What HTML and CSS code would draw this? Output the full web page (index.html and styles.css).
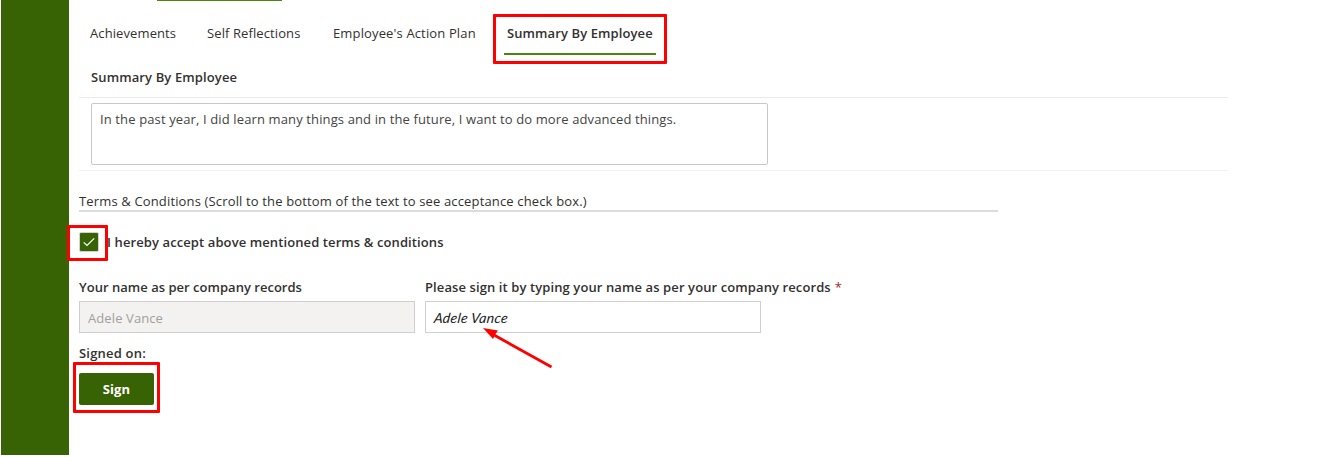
FILE: index.html
```html
<!DOCTYPE html>
<html lang="en">
<head>
<meta charset="utf-8">
<title>Summary By Employee</title>
<link rel="stylesheet" href="styles.css">
</head>
<body>
<div class="page">
  <aside class="rail"></aside>
  <main class="content">
    <div class="parent-tab"></div>
    <nav class="tabs">
      <span class="tab achievements">Achievements</span>
      <span class="tab reflections">Self Reflections</span>
      <span class="tab plan">Employee's Action Plan</span>
      <span class="tab active">Summary By Employee</span>
    </nav>
    <section class="summary">
      <h2 class="heading">Summary By Employee</h2>
      <div class="summary-body">
        <div class="textarea">In the past year, I did learn many things and in the future, I want to do more advanced things.</div>
      </div>
    </section>
    <div class="terms">Terms &amp; Conditions (Scroll to the bottom of the text to see acceptance check box.)</div>
    <div class="accept">
      <span class="checkbox">
        <svg width="18" height="18" viewBox="0 0 18 18"><path d="M3.7 9.4 7 12.5 14.2 5.3" fill="none" stroke="#fff" stroke-width="1.2"/></svg>
      </span>
      <span class="accept-text">I hereby accept above mentioned terms &amp; conditions</span>
    </div>
    <div class="fields">
      <div class="field">
        <div class="label"><span class="name-label">Your name as per company records</span></div>
        <div class="input disabled">Adele Vance</div>
      </div>
      <div class="field">
        <div class="label"><span class="sign-label">Please sign it by typing your name as per your company records</span><span class="required">*</span></div>
        <div class="input"><span class="signature">Adele Vance</span></div>
      </div>
    </div>
    <div class="signed">Signed on:</div>
    <div class="button">Sign</div>
  </main>
  <div class="mark mark-tab"></div>
  <div class="mark mark-check"></div>
  <div class="mark mark-sign"></div>
  <svg class="arrow" width="72" height="44" viewBox="0 0 72 44"><path d="M11 7 68.5 39" stroke="#f00" stroke-width="2.8"/><path d="M0 0 15 2.5 12.5 6 10 11Z" fill="#f00"/></svg>
</div>
</body>
</html>
```
FILE: styles.css
```css
* { box-sizing: border-box; }
body { margin: 0; background: #fff; color: #323130; font-family: "Open Sans", "Noto Sans", sans-serif; font-size: 13px; line-height: 20px; letter-spacing: 0.1px; }
.page { position: relative; width: 1326px; height: 457px; display: flex; padding-left: 1px; overflow: hidden; }
.rail { width: 68px; height: 455px; background: #386304; flex: none; }
.content { padding-left: 10px; width: 1159px; white-space: nowrap; }
.parent-tab { width: 125px; height: 1px; margin-left: 78px; background: #4b860a; }
.tabs { display: flex; height: 54px; padding: 22px 0 0 11px; }
.tab { height: 32px; }
.achievements { width: 117px; }
.reflections { width: 126px; }
.plan { width: 171px; letter-spacing: 0.14px; }
.active { width: 152px; padding-left: 3px; border-bottom: 2px solid #4b860a; font-weight: 600; }
.summary { height: 116px; padding-top: 12px; border-bottom: 1px solid #f2f2f2; }
.heading { margin: 0; height: 31px; padding-left: 12px; font-size: 13px; font-weight: 600; border-bottom: 1px solid #eaeaea; letter-spacing: 0.12px; }
.summary-body { padding: 5px 0 5px 12px; }
.textarea { width: 677px; height: 62px; padding: 5px 8px; border: 1px solid #c8c8c8; border-radius: 2px; color: #444; letter-spacing: 0.125px; }
.terms { width: 919px; height: 22px; margin-top: 19px; border-bottom: 2px solid #dcdcdc; line-height: 22px; letter-spacing: 0.15px; }
.accept { display: flex; gap: 8px; margin-top: 20px; height: 20px; font-weight: 600; }
.checkbox { display: block; width: 20px; height: 20px; background: #386304; border: 1px solid #d2d2d0; border-radius: 2px; }
.checkbox svg { display: block; }
.fields { display: flex; gap: 10px; margin-top: 25px; }
.field { width: 336px; }
.label { height: 24px; font-weight: 600; }
.name-label { letter-spacing: 0.02px; }
.required { margin-left: 4px; color: #a4262c; font-weight: 400; }
.input { height: 32px; padding: 6px 8px; border: 1px solid #d0cfcd; line-height: 20px; }
.disabled { background: #f3f2f1; color: #a19f9d; }
.signature { display: inline-block; font-family: "Lato", sans-serif; font-style: italic; font-size: 14px; letter-spacing: 0.3px; line-height: 18px; color: #222; transform: skewX(-7deg); }
.signed { margin-top: 10px; height: 30px; font-weight: 600; letter-spacing: 0.2px; }
.button { width: 75px; height: 32px; padding-top: 6px; text-align: center; background: #386304; border-radius: 2px; color: #fff; font-weight: 700; }
.mark { position: absolute; border: 3px solid #f00; border-radius: 1px; }
.mark-tab { left: 493px; top: 14px; width: 174px; height: 50px; }
.mark-check { left: 67px; top: 225px; width: 41px; height: 36px; }
.mark-sign { left: 73px; top: 362px; width: 87px; height: 51px; }
.arrow { position: absolute; left: 483px; top: 328px; }
```
